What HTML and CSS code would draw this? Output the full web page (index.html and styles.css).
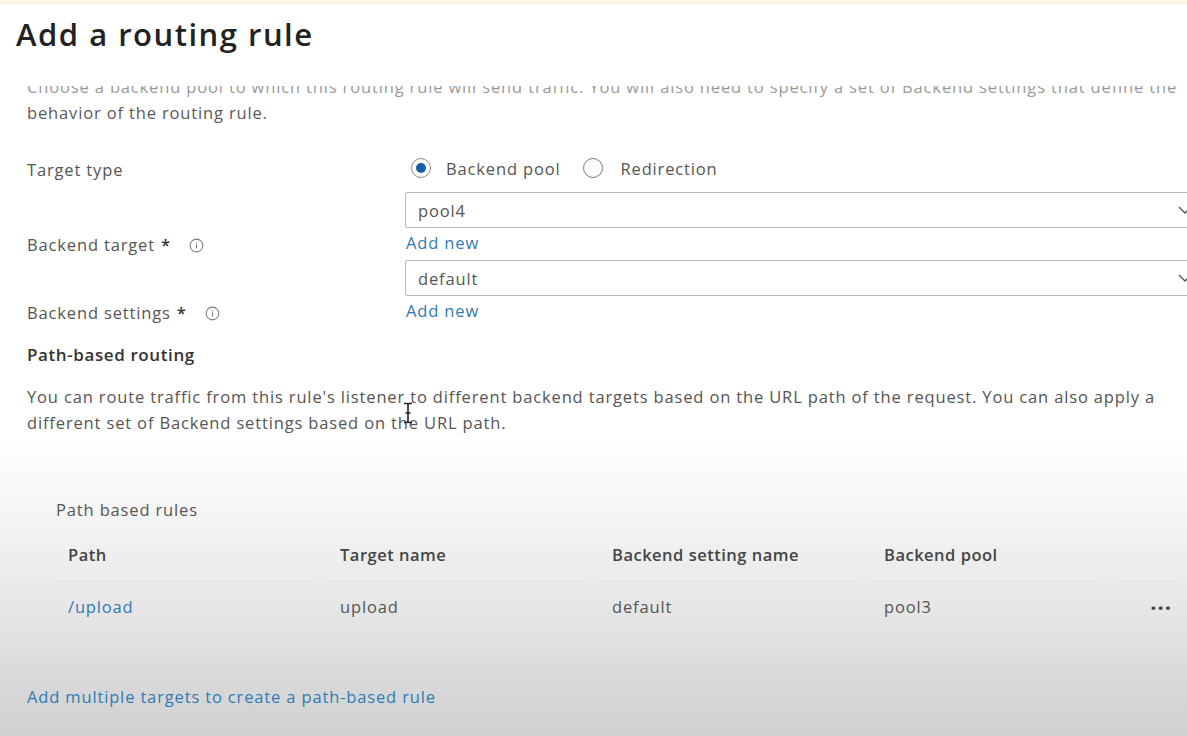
FILE: index.html
```html
<!DOCTYPE html>
<html lang="en">
<head>
<meta charset="utf-8">
<title>Add a routing rule</title>
<link rel="stylesheet" href="styles.css">
</head>
<body>
<div class="strip"></div>
<header class="title-bar">
  <h1>Add a routing rule</h1>
</header>
<main class="scroll">
  <div class="content">
    <p class="intro"><span class="intro-clipped">Choose a backend pool to which this routing rule will send traffic. You will also need to specify a set of Backend settings that define the</span><br>behavior of the routing rule.</p>

    <div class="form">
      <div class="label label-top">Target type</div>
      <div class="radio-row">
        <label class="radio"><span class="ring checked"><span class="dot"></span></span><span>Backend pool</span></label>
        <label class="radio"><span class="ring"></span><span>Redirection</span></label>
      </div>

      <div class="label label-end">Backend target <span class="req">*</span>
        <svg class="info" width="15" height="15" viewBox="0 0 16 16"><circle cx="8" cy="8" r="6.8" fill="none" stroke="#777" stroke-width="1.1"/><rect x="7.45" y="7" width="1.1" height="4.2" fill="#777"/><rect x="7.45" y="4.6" width="1.1" height="1.2" fill="#777"/></svg>
      </div>
      <div class="control">
        <div class="select"><span>pool4</span>
          <svg class="chev" width="14" height="10" viewBox="0 0 14 10"><path d="M1 2 L7 8 L13 2" fill="none" stroke="#555" stroke-width="1.4"/></svg>
        </div>
        <a class="link add-new">Add new</a>
      </div>

      <div class="label label-end">Backend settings <span class="req">*</span>
        <svg class="info" width="15" height="15" viewBox="0 0 16 16"><circle cx="8" cy="8" r="6.8" fill="none" stroke="#777" stroke-width="1.1"/><rect x="7.45" y="7" width="1.1" height="4.2" fill="#777"/><rect x="7.45" y="4.6" width="1.1" height="1.2" fill="#777"/></svg>
      </div>
      <div class="control">
        <div class="select"><span>default</span>
          <svg class="chev" width="14" height="10" viewBox="0 0 14 10"><path d="M1 2 L7 8 L13 2" fill="none" stroke="#555" stroke-width="1.4"/></svg>
        </div>
        <a class="link add-new">Add new</a>
      </div>
    </div>

    <h2 class="section-title">Path-based routing</h2>
    <p class="desc">You can route traffic from this rule's listener to different backend targets based on the URL path of the request. You can also apply a different set of Backend settings based on the URL path.<span class="ibeam"><svg width="12" height="22" viewBox="0 0 12 22"><path d="M2 1.5 H5 Q6 1.5 6 3 V19 Q6 20.5 5 20.5 H2 M10 1.5 H7 Q6 1.5 6 3 M6 19 Q6 20.5 7 20.5 H10 M3.5 11 H8.5" fill="none" stroke="#222" stroke-width="1.6"/></svg></span></p>

    <section class="rules">
      <div class="rules-title">Path based rules</div>
      <div class="table">
        <div class="th">Path</div>
        <div class="th">Target name</div>
        <div class="th">Backend setting name</div>
        <div class="th">Backend pool</div>
        <div class="th th-end"></div>

        <div class="td"><a class="link">/upload</a></div>
        <div class="td">upload</div>
        <div class="td">default</div>
        <div class="td">pool3</div>
        <div class="td td-end"><span class="more">&middot;&middot;&middot;</span></div>
      </div>
    </section>

    <a class="link footer-link">Add multiple targets to create a path-based rule</a>
  </div>
</main>
</body>
</html>
```
FILE: styles.css
```css
html, body {
  margin: 0;
  padding: 0;
}
body {
  width: 1187px;
  height: 736px;
  overflow: hidden;
  font-family: "Open Sans", "Noto Sans", "Liberation Sans", sans-serif;
  font-size: 16.5px;
  letter-spacing: 0.85px;
  color: #555;
  background: linear-gradient(to bottom, #ffffff 0px, #ffffff 440px, #f4f4f4 520px, #e6e6e6 610px, #d9d9d9 680px, #d0d0d0 736px);
}
.strip {
  height: 5px;
  background: #fcf5e4;
}
.title-bar {
  padding: 9px 0 0 16px;
  height: 68px;
  box-sizing: border-box;
}
h1 {
  margin: 0;
  font-size: 31px;
  line-height: 40px;
  font-weight: 600;
  color: #222;
  letter-spacing: 1.5px;
}
.scroll {
  height: 663px;
  overflow: hidden;
  margin-top: 13px;
}
.content {
  margin-top: -12px;
  padding-left: 27px;
  position: relative;
}
.intro {
  margin: 0;
  line-height: 26px;
  white-space: nowrap;
  color: #5a5a5a;
}
.intro-clipped {
  color: #9a9a9a;
}
.form {
  display: grid;
  grid-template-columns: 378px 1fr;
  margin-top: 30px;
  margin-right: -16px;
}
.label {
  line-height: 26px;
  color: #555;
  display: flex;
  align-items: center;
  gap: 6px;
}
.label-top {
  align-self: start;
  margin-top: 1px;
}
.label-end {
  align-self: end;
  margin-bottom: 2px;
}
.req {
  color: #333;
  font-weight: 600;
}
.info {
  margin-left: 12px;
}
.radio-row {
  display: flex;
  align-items: center;
  height: 24px;
  margin-bottom: 12px;
  gap: 23px;
}
.radio {
  display: flex;
  align-items: center;
  gap: 15px;
  color: #555;
}
.radio + .radio {
  gap: 17px;
}
.radio:first-child {
  margin-left: 6px;
}
.ring {
  width: 20px;
  height: 20px;
  box-sizing: border-box;
  border: 1.5px solid #7a7a7a;
  border-radius: 50%;
  display: flex;
  align-items: center;
  justify-content: center;
  background: #fff;
}
.ring.checked {
  border-color: #8a8a8a;
}
.dot {
  width: 10px;
  height: 10px;
  border-radius: 50%;
  background: #1a5fa6;
}
.control {
  display: flex;
  flex-direction: column;
}
.select {
  height: 36px;
  box-sizing: border-box;
  border: 1.5px solid #b8b8b8;
  border-radius: 2px;
  display: flex;
  align-items: center;
  justify-content: space-between;
  padding: 0 10px 0 12px;
  color: #555;
}
.chev {
  flex: none;
}
.link {
  color: #2f7ab4;
  text-decoration: none;
}
.add-new {
  display: block;
  line-height: 30px;
  height: 32px;
  margin-left: 1px;
}
.section-title {
  margin: 15px 0 0;
  font-size: 17px;
  line-height: 24px;
  font-weight: 600;
  color: #333;
  letter-spacing: 0.6px;
}
.desc {
  margin: 17px 0 0;
  line-height: 26px;
  width: 1150px;
  color: #555;
  position: relative;
}
.ibeam {
  position: absolute;
  left: 375px;
  top: 18px;
  line-height: 0;
}
.rules {
  margin-top: 63px;
  padding-left: 29px;
}
.rules-title {
  line-height: 22px;
  color: #555;
}
.table {
  display: grid;
  grid-template-columns: 272px 272px 272px 1fr 60px;
  margin-top: 23px;
  width: 1120px;
}
.th {
  line-height: 22px;
  padding: 0 0 15px 12px;
  font-weight: 600;
  color: #444;
  border-bottom: 1px solid #e2e2e2;
  margin-right: 14px;
  letter-spacing: 0.5px;
}
.th-end {
  margin-right: 0;
}
.td {
  line-height: 22px;
  padding: 14px 0 0 12px;
  color: #555;
}
.td-end {
  text-align: right;
  padding-right: 4px;
}
.more {
  font-size: 22px;
  font-weight: 700;
  color: #444;
  letter-spacing: 1px;
}
.footer-link {
  display: block;
  margin-top: 65px;
  line-height: 22px;
}
```
